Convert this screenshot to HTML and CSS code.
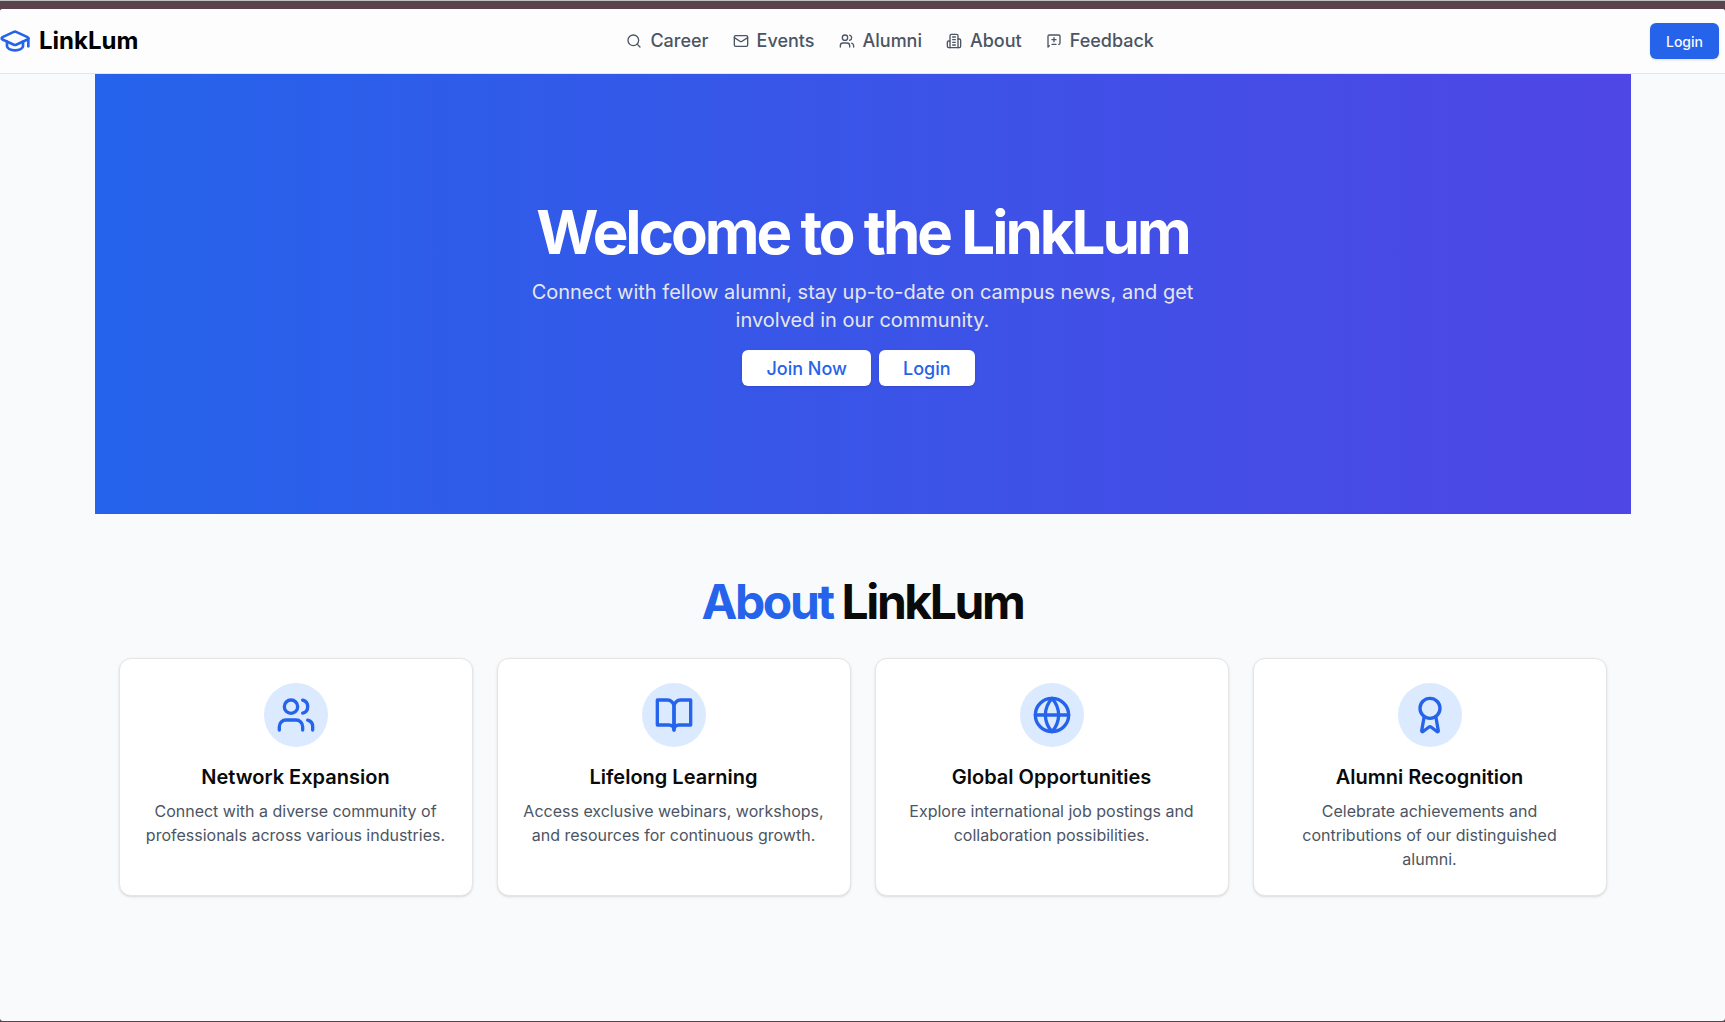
FILE: index.html
```html
<!DOCTYPE html>
<html lang="en">
<head>
  <meta charset="utf-8">
  <meta name="viewport" content="width=device-width, initial-scale=1">
  <title>LinkLum</title>
  <link rel="stylesheet" href="styles.css">
</head>
<body>
  <svg class="sprite" aria-hidden="true">
    <symbol id="users" viewBox="0 0 24 24">
      <path d="M16 21v-2a4 4 0 0 0-4-4H6a4 4 0 0 0-4 4v2"/>
      <circle cx="9" cy="7" r="4"/>
      <path d="M22 21v-2a4 4 0 0 0-3-3.87"/>
      <path d="M16 3.13a4 4 0 0 1 0 7.75"/>
    </symbol>
  </svg>
  <div class="window">
    <header class="header">
      <a class="brand" href="#">
        <svg class="icon icon-brand" viewBox="0 0 24 24" aria-hidden="true">
          <path d="M21.42 10.922a1 1 0 0 0-.019-1.838L12.83 5.18a2 2 0 0 0-1.66 0L2.6 9.08a1 1 0 0 0 0 1.832l8.57 3.908a2 2 0 0 0 1.66 0z"/>
          <path d="M22 10v6"/>
          <path d="M6 12.5V16a6 3 0 0 0 12 0v-3.5"/>
        </svg>
        <span>LinkLum</span>
      </a>
      <nav class="nav">
        <a class="nav-link" href="#">
          <svg class="icon" viewBox="0 0 24 24" aria-hidden="true"><circle cx="11" cy="11" r="8"/><path d="m21 21-4.3-4.3"/></svg>
          Career
        </a>
        <a class="nav-link" href="#">
          <svg class="icon" viewBox="0 0 24 24" aria-hidden="true"><rect width="20" height="16" x="2" y="4" rx="2"/><path d="m22 7-8.97 5.7a1.94 1.94 0 0 1-2.06 0L2 7"/></svg>
          Events
        </a>
        <a class="nav-link" href="#">
          <svg class="icon" aria-hidden="true"><use href="#users"/></svg>
          Alumni
        </a>
        <a class="nav-link" href="#about">
          <svg class="icon" viewBox="0 0 24 24" aria-hidden="true"><path d="M6 22V4a2 2 0 0 1 2-2h8a2 2 0 0 1 2 2v18Z"/><path d="M6 12H4a2 2 0 0 0-2 2v6a2 2 0 0 0 2 2h2"/><path d="M18 9h2a2 2 0 0 1 2 2v9a2 2 0 0 1-2 2h-2"/><path d="M10 6h4"/><path d="M10 10h4"/><path d="M10 14h4"/><path d="M10 18h4"/></svg>
          About
        </a>
        <a class="nav-link" href="#">
          <svg class="icon" viewBox="0 0 24 24" aria-hidden="true"><path d="m5 19-2 2V5a2 2 0 0 1 2-2h14a2 2 0 0 1 2 2v10a2 2 0 0 1-2 2"/><path d="M9 10h6"/><path d="M12 7v6"/><path d="M9 17h6"/></svg>
          Feedback
        </a>
      </nav>
      <button class="button button-primary" type="button">Login</button>
    </header>

    <main class="main">
      <section class="hero">
        <h1 class="hero-title">Welcome to the LinkLum</h1>
        <p class="hero-text">Connect with fellow alumni, stay up-to-date on campus news, and get involved in our community.</p>
        <div class="hero-actions">
          <button class="button button-light" type="button">Join Now</button>
          <button class="button button-light" type="button">Login</button>
        </div>
      </section>

      <section class="about" id="about">
        <h2 class="about-title"><span class="accent">About</span> LinkLum</h2>
        <div class="cards">
          <article class="card">
            <div class="badge"><svg class="icon icon-card" aria-hidden="true"><use href="#users"/></svg></div>
            <h3 class="card-title">Network Expansion</h3>
            <p class="card-text">Connect with a diverse community of professionals across various industries.</p>
          </article>
          <article class="card">
            <div class="badge"><svg class="icon icon-card" viewBox="0 0 24 24" aria-hidden="true"><path d="M2 3h6a4 4 0 0 1 4 4v14a3 3 0 0 0-3-3H2z"/><path d="M22 3h-6a4 4 0 0 0-4 4v14a3 3 0 0 1 3-3h7z"/></svg></div>
            <h3 class="card-title">Lifelong Learning</h3>
            <p class="card-text">Access exclusive webinars, workshops, and resources for continuous growth.</p>
          </article>
          <article class="card">
            <div class="badge"><svg class="icon icon-card" viewBox="0 0 24 24" aria-hidden="true"><circle cx="12" cy="12" r="10"/><path d="M12 2a15.3 15.3 0 0 1 4 10 15.3 15.3 0 0 1-4 10 15.3 15.3 0 0 1-4-10 15.3 15.3 0 0 1 4-10z"/><path d="M2 12h20"/></svg></div>
            <h3 class="card-title">Global Opportunities</h3>
            <p class="card-text">Explore international job postings and collaboration possibilities.</p>
          </article>
          <article class="card">
            <div class="badge"><svg class="icon icon-card" viewBox="0 0 24 24" aria-hidden="true"><path d="m15.477 12.89 1.515 8.526a.5.5 0 0 1-.81.47l-3.58-2.687a1 1 0 0 0-1.197 0l-3.586 2.686a.5.5 0 0 1-.81-.469l1.514-8.526"/><circle cx="12" cy="8" r="6"/></svg></div>
            <h3 class="card-title">Alumni Recognition</h3>
            <p class="card-text">Celebrate achievements and contributions of our distinguished alumni.</p>
          </article>
        </div>
      </section>
    </main>
  </div>
</body>
</html>
```

FILE: styles.css
```css
*,
*::before,
*::after {
  box-sizing: border-box;
}

body {
  display: flex;
  flex-direction: column;
  min-height: 100vh;
  margin: 0;
  padding: 8px 0 1px;
  border-top: 1px solid #bcc2bd;
  background: #5b434e;
  color: #0a0a0a;
  font-family: Inter, "Liberation Sans", sans-serif;
  font-size: 16px;
  line-height: 24px;
}

h1,
h2,
h3,
p {
  margin: 0;
}

a {
  color: inherit;
  text-decoration: none;
}

.sprite {
  position: absolute;
  width: 0;
  height: 0;
}

.window {
  flex: 1;
  border-radius: 3px;
  background: #f9fafc;
  overflow: hidden;
}

.icon {
  flex: none;
  width: 16px;
  height: 16px;
  fill: none;
  stroke: currentColor;
  stroke-width: 2;
  stroke-linecap: round;
  stroke-linejoin: round;
}

.icon-brand {
  width: 32px;
  height: 32px;
  color: #2563eb;
}

.icon-card {
  width: 40px;
  height: 40px;
}

/* Header */
.header {
  display: flex;
  align-items: center;
  justify-content: space-between;
  height: 65px;
  padding-right: 6px;
  border-bottom: 1px solid #e5e5e5;
  background: #fdfdfe;
}

.brand {
  display: flex;
  align-items: center;
  gap: 8px;
  margin-left: -1px;
  color: #000;
  font-size: 24px;
  font-weight: 700;
  line-height: 32px;
}

.nav {
  display: flex;
  gap: 24px;
  margin-right: 8px;
}

.nav-link {
  display: flex;
  align-items: center;
  gap: 8px;
  color: #4b5563;
  font-size: 18px;
  font-weight: 500;
  line-height: 28px;
}

.button {
  height: 36px;
  border: 0;
  border-radius: 6px;
  font-family: inherit;
  font-weight: 500;
  box-shadow: 0 1px 3px rgb(0 0 0 / 10%), 0 1px 2px -1px rgb(0 0 0 / 10%);
  cursor: pointer;
}

.button-primary {
  padding: 0 16px;
  background: #2563eb;
  color: #fafafa;
  font-size: 14px;
}

.button-light {
  margin-right: 8px;
  padding: 0 24px;
  background: #fff;
  color: #2563eb;
  font-size: 18px;
}

/* Hero */
.main {
  max-width: 1536px;
  margin: 0 auto;
}

.hero {
  display: flex;
  flex-direction: column;
  align-items: center;
  gap: 16px;
  padding: 128px 24px;
  background: linear-gradient(to right, #2563eb, #4f46e5);
  text-align: center;
}

.hero-title {
  color: #fff;
  font-size: 60px;
  font-weight: 700;
  line-height: 60px;
  letter-spacing: -0.05em;
}

.hero-text {
  max-width: 700px;
  color: #e5e7eb;
  font-size: 20px;
  line-height: 28px;
}

.hero-actions {
  display: flex;
}

/* About */
.about {
  padding: 64px 24px;
}

.about-title {
  margin-bottom: 32px;
  font-size: 48px;
  font-weight: 700;
  line-height: 48px;
  letter-spacing: -0.05em;
  text-align: center;
}

.accent {
  color: #2563eb;
}

.cards {
  display: grid;
  grid-template-columns: repeat(auto-fit, minmax(280px, 1fr));
  gap: 24px;
}

.card {
  display: flex;
  flex-direction: column;
  align-items: center;
  padding: 24px;
  border: 1px solid #e5e5e5;
  border-radius: 12px;
  background: #fff;
  box-shadow: 0 1px 3px rgb(0 0 0 / 10%), 0 1px 2px -1px rgb(0 0 0 / 10%);
  text-align: center;
}

.badge {
  display: flex;
  margin-bottom: 16px;
  padding: 12px;
  border-radius: 50%;
  background: #dbeafe;
  color: #2563eb;
}

.card-title {
  margin-bottom: 8px;
  font-size: 20px;
  font-weight: 600;
  line-height: 28px;
}

.card-text {
  color: #4b5563;
}
```
